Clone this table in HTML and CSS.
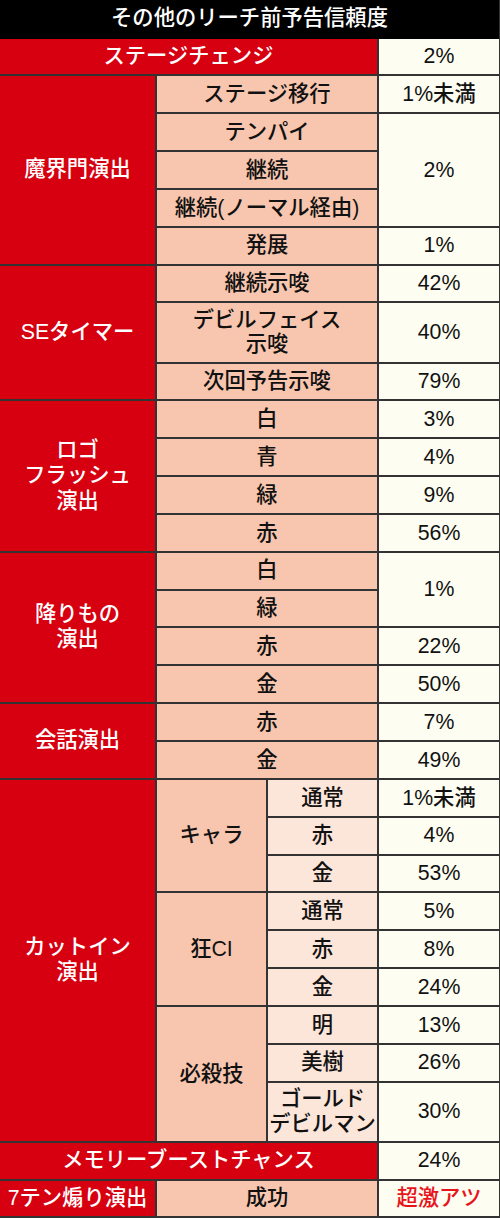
FILE: index.html
```html
<!DOCTYPE html>
<html lang="ja">
<head>
<meta charset="utf-8">
<title>その他のリーチ前予告信頼度</title>
<link rel="stylesheet" href="styles.css">
</head>
<body>
<div class="board">
  <div class="c hd s4">その他のリーチ前予告信頼度</div>

  <div class="c red s3">ステージチェンジ</div>
  <div class="c val">2%</div>

  <div class="c red r5">魔界門演出</div>
  <div class="c sal s2">ステージ移行</div>
  <div class="c val">1%未満</div>
  <div class="c sal s2">テンパイ</div>
  <div class="c val r3">2%</div>
  <div class="c sal s2">継続</div>
  <div class="c sal s2">継続(ノーマル経由)</div>
  <div class="c sal s2">発展</div>
  <div class="c val">1%</div>

  <div class="c red r3">SEタイマー</div>
  <div class="c sal s2">継続示唆</div>
  <div class="c val">42%</div>
  <div class="c sal s2">デビルフェイス<br>示唆</div>
  <div class="c val">40%</div>
  <div class="c sal s2">次回予告示唆</div>
  <div class="c val">79%</div>

  <div class="c red r4">ロゴ<br>フラッシュ<br>演出</div>
  <div class="c sal s2">白</div>
  <div class="c val">3%</div>
  <div class="c sal s2">青</div>
  <div class="c val">4%</div>
  <div class="c sal s2">緑</div>
  <div class="c val">9%</div>
  <div class="c sal s2">赤</div>
  <div class="c val">56%</div>

  <div class="c red r4">降りもの<br>演出</div>
  <div class="c sal s2">白</div>
  <div class="c val r2">1%</div>
  <div class="c sal s2">緑</div>
  <div class="c sal s2">赤</div>
  <div class="c val">22%</div>
  <div class="c sal s2">金</div>
  <div class="c val">50%</div>

  <div class="c red r2">会話演出</div>
  <div class="c sal s2">赤</div>
  <div class="c val">7%</div>
  <div class="c sal s2">金</div>
  <div class="c val">49%</div>

  <div class="c red r9">カットイン<br>演出</div>
  <div class="c sal r3">キャラ</div>
  <div class="c lt">通常</div>
  <div class="c val">1%未満</div>
  <div class="c lt">赤</div>
  <div class="c val">4%</div>
  <div class="c lt">金</div>
  <div class="c val">53%</div>
  <div class="c sal r3">狂CI</div>
  <div class="c lt">通常</div>
  <div class="c val">5%</div>
  <div class="c lt">赤</div>
  <div class="c val">8%</div>
  <div class="c lt">金</div>
  <div class="c val">24%</div>
  <div class="c sal r3">必殺技</div>
  <div class="c lt">明</div>
  <div class="c val">13%</div>
  <div class="c lt">美樹</div>
  <div class="c val">26%</div>
  <div class="c lt">ゴールド<br>デビルマン</div>
  <div class="c val">30%</div>

  <div class="c red s3">メモリーブーストチャンス</div>
  <div class="c val">24%</div>

  <div class="c red">7テン煽り演出</div>
  <div class="c sal s2">成功</div>
  <div class="c val hot">超激アツ</div>
</div>
</body>
</html>
```

FILE: styles.css
```css
html, body {
  margin: 0;
  padding: 0;
  background: #ffffff;
}

.board {
  width: 500px;
  box-sizing: border-box;
  padding: 0 1px 2px 0;
  background: #333333;
  display: grid;
  grid-template-columns: 155px 109px 109px 120px;
  grid-template-rows: 36.5px repeat(7, 35.85px) 58.15px repeat(19, 35.85px) 58.15px repeat(2, 35.85px);
  gap: 2px;
  font-family: "Liberation Sans", "Noto Sans CJK JP", sans-serif;
  font-size: 21.3px;
  font-weight: 500;
  line-height: 1.15;
}

.c {
  display: flex;
  align-items: center;
  justify-content: center;
  text-align: center;
  color: #111111;
}

.hd {
  background: #000000;
  color: #ffffff;
  margin-bottom: -2px;
  padding-bottom: 2px;
}

.red {
  background: #d70010;
  color: #ffffff;
  line-height: 1.2;
}

.sal { background: #f8c6ae; }
.lt { background: #fce5d9; }
.val { background: #fdfdf1; }
.hot { color: #e8141c; }

.s2 { grid-column: span 2; }
.s3 { grid-column: span 3; }
.s4 { grid-column: span 4; }
.r2 { grid-row: span 2; }
.r3 { grid-row: span 3; }
.r4 { grid-row: span 4; }
.r5 { grid-row: span 5; }
.r9 { grid-row: span 9; }
```
